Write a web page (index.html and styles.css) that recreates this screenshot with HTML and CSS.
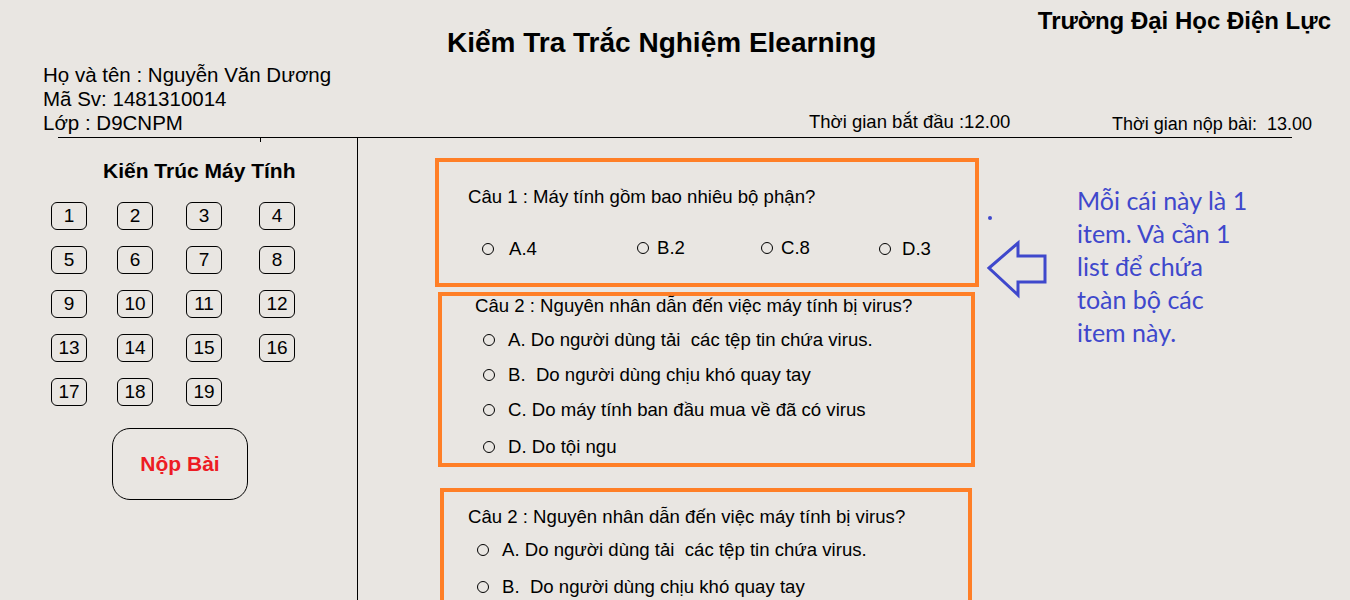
FILE: index.html
```html
<!DOCTYPE html>
<html lang="vi">
<head>
<meta charset="utf-8">
<title>Kiểm Tra Trắc Nghiệm Elearning</title>
<link rel="stylesheet" href="styles.css">
</head>
<body>
<header class="top">
  <div class="top-row">
    <h1 class="title">Kiểm Tra Trắc Nghiệm Elearning</h1>
    <div class="school">Trường Đại Học Điện Lực</div>
  </div>
  <div class="info-row">
    <div class="student">
      <div>Họ và tên : Nguyễn Văn Dương</div>
      <div>Mã Sv: 1481310014</div>
      <div>Lớp : D9CNPM</div>
    </div>
    <div class="start">Thời gian bắt đầu :12.00</div>
    <div class="submit-time">Thời gian nộp bài:&nbsp; 13.00</div>
  </div>
  <div class="rule"></div>
</header>
<main class="main">
  <aside class="sidebar">
    <div class="subject">Kiến Trúc Máy Tính</div>
    <div class="nums">
      <button class="num">1</button><button class="num">2</button><button class="num">3</button><button class="num">4</button>
      <button class="num">5</button><button class="num">6</button><button class="num">7</button><button class="num">8</button>
      <button class="num">9</button><button class="num">10</button><button class="num">11</button><button class="num">12</button>
      <button class="num">13</button><button class="num">14</button><button class="num">15</button><button class="num">16</button>
      <button class="num">17</button><button class="num">18</button><button class="num">19</button>
    </div>
    <button class="send">Nộp Bài</button>
  </aside>
  <section class="content">
    <div class="questions">
      <div class="q q1">
        <div class="q-title">Câu 1 : Máy tính gồm bao nhiêu bộ phận?</div>
        <div class="opts-row">
          <div class="opt oa"><span class="radio"></span><span>A.4</span></div>
          <div class="opt ob"><span class="radio"></span><span>B.2</span></div>
          <div class="opt oc"><span class="radio"></span><span>C.8</span></div>
          <div class="opt od"><span class="radio"></span><span>D.3</span></div>
        </div>
      </div>
      <div class="q q2">
        <div class="q-title">Câu 2 : Nguyên nhân dẫn đến việc máy tính bị virus?</div>
        <div class="opt-line"><span class="radio"></span><span>A. Do người dùng tải&nbsp; các tệp tin chứa virus.</span></div>
        <div class="opt-line"><span class="radio"></span><span>B.&nbsp; Do người dùng chịu khó quay tay</span></div>
        <div class="opt-line"><span class="radio"></span><span>C. Do máy tính ban đầu mua về đã có virus</span></div>
        <div class="opt-line"><span class="radio"></span><span>D. Do tội ngu</span></div>
      </div>
      <div class="q q3">
        <div class="q-title">Câu 2 : Nguyên nhân dẫn đến việc máy tính bị virus?</div>
        <div class="opt-line"><span class="radio"></span><span>A. Do người dùng tải&nbsp; các tệp tin chứa virus.</span></div>
        <div class="opt-line"><span class="radio"></span><span>B.&nbsp; Do người dùng chịu khó quay tay</span></div>
      </div>
    </div>
    <div class="note">
      <svg class="arrow" width="70" height="100" viewBox="0 0 70 100">
        <circle cx="5" cy="8" r="2" fill="#3f48cc"/>
        <polygon points="4,58 33,33 33,46 60,46 60,72 33,72 33,85" fill="none" stroke="#3f48cc" stroke-width="3"/>
      </svg>
      <div class="note-text">Mỗi cái này là 1<br>item. Và cần 1<br>list để chứa<br>toàn bộ các<br>item này.</div>
    </div>
  </section>
</main>
</body>
</html>
```
FILE: styles.css
```css
* { box-sizing: border-box; }
html, body { margin: 0; padding: 0; }
body {
  width: 1350px;
  height: 600px;
  overflow: hidden;
  background: #e9e6e2;
  color: #000;
  font-family: "Liberation Sans", Arial, sans-serif;
}
.top-row {
  display: flex;
  align-items: flex-start;
  height: 63px;
}
.title {
  margin: 27px 0 0 447px;
  font-size: 28px;
  font-weight: bold;
  line-height: 32px;
}
.school {
  margin: 7px 19px 0 auto;
  font-size: 24px;
  font-weight: bold;
  line-height: 28px;
}
.info-row {
  display: flex;
  align-items: flex-end;
  height: 74px;
}
.student {
  width: 809px;
  padding-left: 43px;
  font-size: 20.5px;
  line-height: 24px;
  margin-bottom: 2px;
}
.start {
  width: 303px;
  font-size: 18.5px;
  line-height: 20px;
  margin-bottom: 5px;
}
.submit-time {
  font-size: 18px;
  line-height: 20px;
  margin-bottom: 3px;
}
.rule {
  position: relative;
  margin-left: 58px;
  width: 1234px;
  height: 1px;
  background: #000;
}
.rule::after {
  content: "";
  position: absolute;
  left: 202px;
  top: 0;
  width: 1px;
  height: 5px;
  background: #000;
}
.main {
  display: flex;
  height: 462px;
}
.sidebar {
  width: 358px;
  flex: none;
  border-right: 1px solid #000;
}
.subject {
  margin-top: 22px;
  padding-left: 103px;
  font-size: 21px;
  font-weight: bold;
  line-height: 22px;
}
.nums {
  display: grid;
  grid-template-columns: 66px 69px 73px 36px;
  grid-auto-rows: 28px;
  row-gap: 16px;
  margin-top: 20px;
  padding-left: 51px;
}
.num {
  width: 36px;
  height: 28px;
  padding: 0;
  border: 1px solid #000;
  border-radius: 6px;
  background: transparent;
  font-family: "Liberation Sans", Arial, sans-serif;
  font-size: 19px;
  color: #000;
  line-height: 26px;
}
.send {
  display: block;
  margin: 22px 0 0 112px;
  width: 136px;
  height: 72px;
  border: 1px solid #000;
  border-radius: 18px;
  background: transparent;
  color: #ed1c24;
  font-family: "Liberation Sans", Arial, sans-serif;
  font-size: 21px;
  font-weight: bold;
}
.content {
  display: flex;
  align-items: flex-start;
}
.questions {
  display: flex;
  flex-direction: column;
  align-items: flex-start;
  margin-left: 77px;
  padding-top: 20px;
}
.q {
  border: 4px solid #ff7f27;
  font-size: 18.6px;
}
.q1 {
  width: 544px;
  height: 129px;
  padding: 24px 0 0 29px;
}
.q-title { line-height: 22px; }
.opts-row {
  display: grid;
  grid-template-columns: 155px 124px 118px auto;
  margin-top: 30px;
  padding-left: 14px;
  line-height: 22px;
}
.opt { display: flex; align-items: center; }
.opt .radio { margin-right: 15px; }
.ob .radio, .oc .radio { margin-right: 8px; }
.ob, .oc { margin-top: -3px; }
.od .radio { margin-right: 11px; }
.radio {
  display: inline-block;
  flex: none;
  width: 12px;
  height: 12px;
  border: 1px solid #000;
  border-radius: 50%;
}
.q2 {
  margin: 5px 0 0 3px;
  width: 537px;
  height: 175px;
  padding-left: 33px;
}
.q2 .q-title { line-height: 20px; }
.opt-line {
  display: flex;
  align-items: center;
  line-height: 22px;
}
.opt-line .radio { margin-right: 13px; }
.q2 .opt-line { margin-top: 13px; margin-left: 8px; }
.q2 .opt-line:last-child { margin-top: 15px; }
.q3 {
  margin: 21px 0 0 5px;
  width: 532px;
  height: 140px;
  padding: 14px 0 0 24px;
}
.q3 .opt-line { margin-top: 11px; margin-left: 9px; }
.q3 .opt-line + .opt-line { margin-top: 15px; }
.note {
  display: flex;
  align-items: flex-start;
  margin-left: 6px;
}
.arrow {
  display: block;
  flex: none;
  margin-top: 72px;
}
.note-text {
  margin: 46px 0 0 22px;
  font-family: Lato, "Open Sans", sans-serif;
  font-size: 25px;
  line-height: 33px;
  color: #3f48cc;
  white-space: nowrap;
}
```
